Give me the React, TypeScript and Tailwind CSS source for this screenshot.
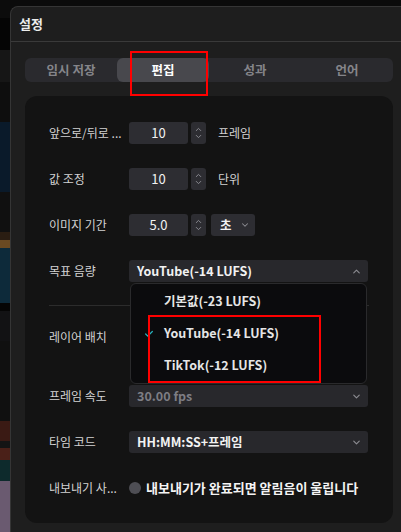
import { ChevronDown, ChevronUp, Check } from "lucide-react";

const font = { fontFamily: '"Noto Sans CJK KR", "Noto Sans", sans-serif' };

const tabs = ["임시 저장", "편집", "성과", "언어"];

const loudness = ["기본값(-23 LUFS)", "YouTube(-14 LUFS)", "TikTok(-12 LUFS)"];

function Spinner() {
  return (
    <div className="ml-[3px] flex h-[22px] w-[15px] flex-col items-center justify-center rounded-[3px] bg-[#2d2d32] text-[#8c8c92]">
      <ChevronUp size={9} strokeWidth={2.5} className="-mb-[2px]" />
      <ChevronDown size={9} strokeWidth={2.5} />
    </div>
  );
}

function NumberField({ value }: { value: string }) {
  return (
    <div className="flex items-center">
      <div className="flex h-[22px] w-[59px] items-center justify-center rounded-[3px] bg-[#2d2d32] text-[13px] text-[#f2f2f2]">
        {value}
      </div>
      <Spinner />
    </div>
  );
}

function Select({
  value,
  open,
  dim,
}: {
  value: string;
  open?: boolean;
  dim?: boolean;
}) {
  return (
    <div className="flex h-[22px] w-[239px] items-center justify-between rounded-[3px] bg-[#28282c] pl-2 pr-[6px]">
      <span
        className={`text-[12.5px] font-bold ${dim ? "text-[#7d7d84]" : "text-[#f2f2f2]"}`}
      >
        {value}
      </span>
      {open ? (
        <ChevronUp size={11} strokeWidth={2.5} className="text-[#8c8c92]" />
      ) : (
        <ChevronDown size={11} strokeWidth={2.5} className="text-[#8c8c92]" />
      )}
    </div>
  );
}

function Row({
  label,
  children,
  className = "h-[46px]",
}: {
  label: string;
  children?: React.ReactNode;
  className?: string;
}) {
  return (
    <div className={`flex items-center ${className}`}>
      <div className="w-[80px] whitespace-nowrap pr-1 text-[12px] text-[#d2d2d2]">
        {label}
      </div>
      {children}
    </div>
  );
}

export default function App() {
  return (
    <div
      className="relative flex h-[532px] w-[401px] overflow-hidden bg-[#0b0b0b]"
      style={font}
    >
      {/* editor behind the dialog */}
      <div className="flex w-[10px] shrink-0 flex-col">
        <div className="h-[18px] bg-[#0c0c0c]" />
        <div className="h-[32px] bg-[#050505]" />
        <div className="h-[32px] bg-[#161616]" />
        <div className="h-[40px] bg-[#0e0e0e]" />
        <div className="h-[70px] bg-[#0a1a2a]" />
        <div className="h-[40px] bg-[#101010]" />
        <div className="h-[8px] bg-[#2a1d12]" />
        <div className="h-[8px] bg-[#6b4a22]" />
        <div className="h-[55px] bg-[#0d2a3a]" />
        <div className="h-[8px] bg-[#050505]" />
        <div className="h-[30px] bg-[#121214]" />
        <div className="h-[80px] bg-[#101010]" />
        <div className="h-[20px] bg-[#3a1a14]" />
        <div className="h-[7px] bg-[#141414]" />
        <div className="h-[12px] bg-[#4a2018]" />
        <div className="h-[21px] bg-[#0d2a2c]" />
        <div className="flex-1 bg-[#6a5a70]" />
      </div>

      {/* settings dialog */}
      <div className="mt-[6px] w-[397px] shrink-0 rounded-tl-lg border-l border-t border-[#353535] bg-[#1e1e1e]">
        <div className="flex h-[35px] items-center border-b border-[#3a3a3a] pl-[8px] text-[13px] font-bold text-[#ececec]">
          설정
        </div>

        <div className="px-[14px] pt-[16px]">
          <div className="flex h-[24px] rounded-md bg-[#2a2a2e]">
            {tabs.map((t, i) => (
              <div
                key={t}
                className={`flex flex-1 items-center justify-center rounded-md text-[12.5px] font-bold ${
                  i === 1 ? "bg-[#48484d] text-white" : "text-[#85858a]"
                }`}
              >
                {t}
              </div>
            ))}
          </div>

          <div className="mt-[14px] rounded-xl bg-[#131313] px-[24px] pb-[12px] pt-[14px]">
            <Row label="앞으로/뒤로 ...">
              <NumberField value="10" />
              <span className="ml-[12px] text-[12px] text-[#d2d2d2]">프레임</span>
            </Row>
            <Row label="값 조정">
              <NumberField value="10" />
              <span className="ml-[12px] text-[12px] text-[#d2d2d2]">단위</span>
            </Row>
            <Row label="이미지 기간">
              <NumberField value="5.0" />
              <div className="ml-[5px] flex h-[22px] w-[44px] items-center justify-between rounded-[3px] bg-[#2d2d32] pl-[9px] pr-[5px]">
                <span className="text-[12.5px] font-bold text-[#f2f2f2]">초</span>
                <ChevronDown size={10} strokeWidth={2.5} className="text-[#8c8c92]" />
              </div>
            </Row>
            <Row label="목표 음량">
              <Select value="YouTube(-14 LUFS)" open />
            </Row>
            <div className="mt-[11px] border-t border-[#2c2c2c]" />
            <Row label="레이어 배치" className="mt-[8px] h-[46px]" />
            <Row label="프레임 속도" className="mt-[13px] h-[46px]">
              <Select value="30.00 fps" dim />
            </Row>
            <Row label="타임 코드">
              <Select value="HH:MM:SS+프레임" />
            </Row>
            <Row label="내보내기 사...">
              <div className="flex items-center">
                <div className="h-[12px] w-[12px] rounded-full bg-[#4e4e54]" />
                <span className="ml-[5px] text-[13px] font-bold text-[#f4f4f4]">
                  내보내기가 완료되면 알림음이 울립니다
                </span>
              </div>
            </Row>
          </div>
        </div>
      </div>

      {/* open loudness menu */}
      <div className="absolute left-[130px] top-[283px] flex h-[101px] w-[237px] flex-col rounded-md border border-[#2a2a2c] bg-[#0b0b0d] py-[2px]">
        {loudness.map((item, i) => (
          <div key={item} className="flex h-[32px] items-center">
            <div className="flex w-[33px] justify-center pl-[3px]">
              {i === 1 && (
                <Check size={10} strokeWidth={3} className="text-[#27b3bf]" />
              )}
            </div>
            <span className="text-[12.5px] font-bold text-[#e6e6e6]">{item}</span>
          </div>
        ))}
      </div>

      {/* red highlight boxes */}
      <div className="absolute left-[130px] top-[51px] h-[45px] w-[78px] border-2 border-[#ff0000]" />
      <div className="absolute left-[148px] top-[315px] h-[68px] w-[173px] border-2 border-[#ff0000]" />
    </div>
  );
}
